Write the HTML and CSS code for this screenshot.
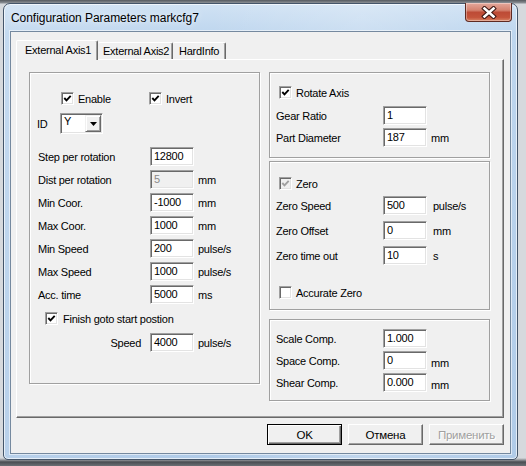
FILE: index.html
```html
<!DOCTYPE html>
<html>
<head>
<meta charset="utf-8">
<title>Configuration Parameters markcfg7</title>
<link rel="stylesheet" href="styles.css">
</head>
<body>
<div class="desktop">
  <div class="window">
    <div class="titlebar">
      <span class="title">Configuration Parameters markcfg7</span>
      <div class="close">
        <svg width="16" height="13" viewBox="0 0 16 13">
          <path d="M3.5 2.5 L12.5 10.5 M12.5 2.5 L3.5 10.5" stroke="#3b1612" stroke-width="4.6" stroke-linecap="square" fill="none"/>
          <path d="M3.5 2.5 L12.5 10.5 M12.5 2.5 L3.5 10.5" stroke="#fff" stroke-width="2.6" stroke-linecap="square" fill="none"/>
        </svg>
      </div>
    </div>
    <div class="client">
      <div class="tabs">
        <div class="tab active">External Axis1</div>
        <div class="tab t2">External Axis2</div>
        <div class="tab t3">HardInfo</div>
      </div>
      <div class="panel">
        <div class="group lg">
          <div class="cbrow">
            <label class="cbitem w88"><span class="cb"><svg viewBox="0 0 13 13"><path d="M3.3 6 L5.5 8.3 L9.7 3.9"/></svg></span>Enable</label>
            <label class="cbitem"><span class="cb"><svg viewBox="0 0 13 13"><path d="M3.3 6 L5.5 8.3 L9.7 3.9"/></svg></span>Invert</label>
          </div>
          <div class="idrow">
            <span class="idlabel">ID</span>
            <div class="combo"><span class="val">Y</span><span class="dd"><svg width="7" height="4" viewBox="0 0 7 4"><path d="M0 0 H7 L3.5 4 Z" fill="#000"/></svg></span></div>
          </div>
          <div class="fields f-left">
            <span>Step per rotation</span><span class="edit">12800</span><span></span>
            <span>Dist per rotation</span><span class="edit dis">5</span><span>mm</span>
            <span>Min Coor.</span><span class="edit">-1000</span><span>mm</span>
            <span>Max Coor.</span><span class="edit">1000</span><span>mm</span>
            <span>Min Speed</span><span class="edit">200</span><span>pulse/s</span>
            <span>Max Speed</span><span class="edit">1000</span><span>pulse/s</span>
            <span>Acc. time</span><span class="edit">5000</span><span>ms</span>
          </div>
          <div class="cbrow finish">
            <label class="cbitem"><span class="cb"><svg viewBox="0 0 13 13"><path d="M3.3 6 L5.5 8.3 L9.7 3.9"/></svg></span>Finish goto start postion</label>
          </div>
          <div class="fields f-left speed">
            <span class="rt">Speed</span><span class="edit">4000</span><span>pulse/s</span>
          </div>
        </div>
        <div class="rcol">
          <div class="group g1">
            <div class="cbrow">
              <label class="cbitem"><span class="cb"><svg viewBox="0 0 13 13"><path d="M3.3 6 L5.5 8.3 L9.7 3.9"/></svg></span>Rotate Axis</label>
            </div>
            <div class="fields f-right">
              <span>Gear Ratio</span><span class="edit">1</span><span></span>
              <span>Part Diameter</span><span class="edit">187</span><span>mm</span>
            </div>
          </div>
          <div class="group g2">
            <div class="cbrow">
              <label class="cbitem"><span class="cb off"><svg viewBox="0 0 13 13"><path d="M3.3 6 L5.5 8.3 L9.7 3.9"/></svg></span>Zero</label>
            </div>
            <div class="fields f-right zf">
              <span>Zero Speed</span><span class="edit">500</span><span class="u2">pulse/s</span>
              <span>Zero Offset</span><span class="edit">0</span><span class="u2">mm</span>
              <span>Zero time out</span><span class="edit">10</span><span class="u2">s</span>
            </div>
            <div class="cbrow acc">
              <label class="cbitem"><span class="cb empty"></span>Accurate Zero</label>
            </div>
          </div>
          <div class="group g3">
            <div class="fields f-right">
              <span>Scale Comp.</span><span class="edit">1.000</span><span></span>
              <span>Space Comp.</span><span class="edit">0</span><span class="low">mm</span>
              <span>Shear Comp.</span><span class="edit">0.000</span><span class="low">mm</span>
            </div>
          </div>
        </div>
      </div>
      <div class="buttons">
        <div class="btn def">OK</div>
        <div class="btn">Отмена</div>
        <div class="btn disabled">Применить</div>
      </div>
    </div>
  </div>
</div>
</body>
</html>
```

FILE: styles.css
```css
* { box-sizing: border-box; }
html, body { margin: 0; padding: 0; }
body {
  width: 526px;
  height: 466px;
  overflow: hidden;
  background: #c9cdd2;
  font-family: "Liberation Sans", Arial, sans-serif;
  font-size: 11px;
  letter-spacing: -0.25px;
  color: #000;
}
.desktop {
  height: 466px;
  padding: 3px 0 0 3px;
  background: linear-gradient(180deg, #55595e 0, #8a8f95 3px, #d6d9dd 4px, #d6d9dd 458px, #4a4d52 462px, #6b6f74 466px);
}
.window {
  width: 515px;
  height: 457px;
  border: 1px solid #44556a;
  border-radius: 7px 7px 5px 5px;
  background: linear-gradient(90deg, rgba(255,255,255,0.1), rgba(255,255,255,0) 40%, rgba(255,255,255,0.2) 70%, rgba(255,255,255,0) 100%),
              linear-gradient(180deg, #d0e2f4 0, #bed6ee 30px, #b0cbe8 100%);
  box-shadow: inset 0 0 0 1px rgba(255,255,255,0.65);
  padding: 0 6px 5px 6px;
  display: flex;
  flex-direction: column;
}
.titlebar {
  height: 27px;
  flex: none;
  display: flex;
  justify-content: space-between;
  align-items: flex-start;
}
.title {
  font-size: 12px;
  letter-spacing: -0.05px;
  margin: 7px 0 0 1px;
  color: #000;
  text-shadow: 0 0 6px rgba(255,255,255,0.9);
}
.close {
  width: 47px;
  height: 19px;
  margin: -1px -1px 0 0;
  border: 1px solid #5e2a22;
  border-top: none;
  border-radius: 0 0 4px 4px;
  background: linear-gradient(180deg, #e4a89c 0, #d4826f 40%, #bd4b36 52%, #c4543b 80%, #d98566 100%);
  box-shadow: inset 0 0 0 1px rgba(255,255,255,0.35);
  display: flex;
  align-items: center;
  justify-content: center;
}
.client {
  width: 501px;
  height: 423px;
  background: #f0f0f0;
  border: 1px solid #75899f;
  box-shadow: 0 0 0 1px rgba(255,255,255,0.55);
  padding: 8px 0 0 5px;
}
.tabs {
  display: flex;
  align-items: flex-end;
  height: 20px;
  position: relative;
  z-index: 1;
}
.tab {
  background: #f0f0f0;
  border-left: 1px solid #fff;
  border-top: 1px solid #fff;
  border-right: 1px solid #696969;
  border-radius: 2px 2px 0 0;
  box-shadow: inset -1px 0 0 #a0a0a0;
  height: 17px;
  line-height: 15px;
  white-space: nowrap;
}
.tab.active {
  width: 82px;
  height: 20px;
  padding: 2px 0 0 8px;
}
.tab.t2 {
  width: 75px;
  margin-bottom: 1px;
  padding: 1px 0 0 5px;
  border-left: none;
}
.tab.t3 {
  width: 53px;
  margin-bottom: 1px;
  padding: 1px 0 0 6px;
  border-left: none;
}
.panel {
  width: 488px;
  height: 359px;
  margin-top: -1px;
  border-left: 1px solid #fff;
  border-top: 1px solid #fff;
  border-right: 1px solid #696969;
  border-bottom: 1px solid #696969;
  box-shadow: inset -1px -1px 0 #a0a0a0;
  padding: 12px 0 0 12px;
  display: flex;
  gap: 9px;
}
.group {
  border: 1px solid #a0a0a0;
  box-shadow: inset 1px 1px 0 #fff, 1px 1px 0 #fff;
}
.lg {
  width: 231px;
  height: 312px;
  padding-top: 19px;
}
.rcol {
  width: 221px;
  display: flex;
  flex-direction: column;
}
.g1 { height: 86px; padding-top: 13px; }
.g2 { height: 149px; margin-top: 3px; padding-top: 15px; }
.g3 { height: 82px; margin-top: 9px; padding-top: 9px; }

.cbrow {
  display: flex;
  height: 13px;
  align-items: center;
}
.lg > .cbrow:first-child { padding-left: 31px; }
.rcol .cbrow { padding-left: 9px; }
.cbitem {
  display: flex;
  align-items: center;
  gap: 4px;
  white-space: nowrap;
}
.w88 { width: 88px; }
.finish { margin-top: 8px; padding-left: 15px; }
.finish .cbitem { gap: 5px; }
.acc { margin-top: 21px; }

.cb {
  width: 13px;
  height: 13px;
  flex: none;
  background: #fff;
  border: 1px solid;
  border-color: #a0a0a0 #fff #fff #a0a0a0;
  box-shadow: inset 1px 1px 0 #696969, inset -1px -1px 0 #e3e3e3;
  position: relative;
}
.cb svg {
  position: absolute;
  left: -1px;
  top: -1px;
  width: 13px;
  height: 13px;
}
.cb svg path {
  fill: none;
  stroke: #000;
  stroke-width: 1.9;
}
.cb.off { background: #f0f0f0; }
.cb.off svg path { stroke: #a0a0a0; }

.idrow {
  margin-top: 8px;
  padding-left: 7px;
  display: flex;
  align-items: center;
}
.idlabel { width: 23px; }
.combo {
  width: 43px;
  height: 21px;
  background: #fff;
  border: 1px solid;
  border-color: #a0a0a0 #fff #fff #a0a0a0;
  box-shadow: inset 1px 1px 0 #696969, inset -1px -1px 0 #e3e3e3;
  padding: 1px;
  display: flex;
}
.combo .val {
  flex: 1;
  padding: 0 0 0 2px;
  line-height: 12px;
}
.combo .dd {
  width: 16px;
  height: 17px;
  background: #f0f0f0;
  border: 1px solid;
  border-color: #f0f0f0 #696969 #696969 #f0f0f0;
  box-shadow: inset 1px 1px 0 #fff, inset -1px -1px 0 #a0a0a0;
  display: flex;
  align-items: center;
  justify-content: center;
}

.fields {
  display: grid;
  column-gap: 4px;
  align-items: center;
  white-space: nowrap;
}
.f-left {
  margin-top: 13px;
  padding-left: 8px;
  grid-template-columns: 108px 44px auto;
  grid-auto-rows: 19px;
  row-gap: 4px;
}
.f-left.speed { margin-top: 8px; }
.rt { text-align: right; padding-right: 5px; }
.f-right {
  padding-left: 6px;
  grid-template-columns: 103px 44px auto;
  grid-auto-rows: 19px;
  row-gap: 3px;
}
.g1 .f-right { margin-top: 7px; }
.zf { margin-top: 6px; row-gap: 6px; }
.u2 { padding-left: 2px; }
.low { padding-top: 4px; }

.edit {
  height: 19px;
  background: #fff;
  border: 1px solid;
  border-color: #a0a0a0 #fff #fff #a0a0a0;
  box-shadow: inset 1px 1px 0 #696969, inset -1px -1px 0 #e3e3e3;
  padding: 2px 0 0 3px;
  line-height: 13px;
}
.edit.dis {
  background: #f0f0f0;
  color: #8a8a8a;
}

.buttons {
  width: 488px;
  margin-top: 6px;
  display: flex;
  justify-content: flex-end;
  gap: 6px;
}
.btn {
  width: 75px;
  height: 21px;
  background: #f0f0f0;
  border: 1px solid;
  border-color: #fff #696969 #696969 #fff;
  box-shadow: inset -1px -1px 0 #a0a0a0;
  display: flex;
  align-items: center;
  justify-content: center;
  font-size: 11.5px;
}
.btn.def {
  border: 1px solid #000;
  box-shadow: inset 1px 1px 0 #fff, inset -1px -1px 0 #696969, inset -2px -2px 0 #a0a0a0;
}
.btn.disabled {
  color: #a0a0a0;
  text-shadow: 1px 1px 0 #fff;
}
```
